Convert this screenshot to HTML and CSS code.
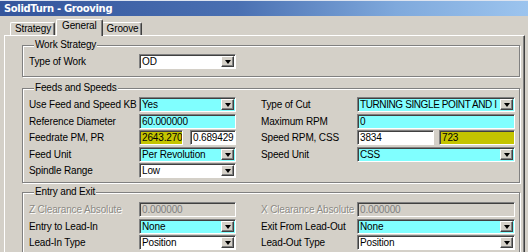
FILE: index.html
```html
<!DOCTYPE html>
<html>
<head>
<meta charset="utf-8">
<link rel="stylesheet" href="styles.css">
</head>
<body>
<div class="window">
  <div class="titlebar"><span class="title">SolidTurn - Grooving</span></div>
  <div class="client">
    <div class="tabs">
      <div class="tab first">Strategy</div>
      <div class="tab active">General</div>
      <div class="tab">Groove</div>
    </div>
    <div class="panel">
      <fieldset class="group g-work">
        <legend>Work Strategy</legend>
        <div class="grid">
          <div class="lbl">Type of Work</div>
          <div class="combo white"><span class="val">OD</span><span class="btn"><i></i></span></div>
        </div>
      </fieldset>

      <fieldset class="group g-feeds">
        <legend>Feeds and Speeds</legend>
        <div class="grid">
          <div class="lbl">Use Feed and Speed KB</div>
          <div class="combo cyan"><span class="val">Yes</span><span class="btn"><i></i></span></div>
          <div class="lbl r">Type of Cut</div>
          <div class="combo cyan"><span class="val caps">TURNING SINGLE POINT AND I</span><span class="btn"><i></i></span></div>

          <div class="lbl">Reference Diameter</div>
          <div class="field cyan">60.000000</div>
          <div class="lbl r">Maximum RPM</div>
          <div class="field cyan">0</div>

          <div class="lbl">Feedrate PM, PR</div>
          <div class="pair left">
            <div class="field olive">2643.270</div>
            <div class="field white">0.689429</div>
          </div>
          <div class="lbl r">Speed RPM, CSS</div>
          <div class="pair right">
            <div class="field white">3834</div>
            <div class="field olive">723</div>
          </div>

          <div class="lbl">Feed Unit</div>
          <div class="combo cyan"><span class="val">Per Revolution</span><span class="btn"><i></i></span></div>
          <div class="lbl r">Speed Unit</div>
          <div class="combo cyan"><span class="val">CSS</span><span class="btn"><i></i></span></div>

          <div class="lbl">Spindle Range</div>
          <div class="combo white"><span class="val">Low</span><span class="btn"><i></i></span></div>
        </div>
      </fieldset>

      <fieldset class="group g-entry">
        <legend>Entry and Exit</legend>
        <div class="grid">
          <div class="lbl dis">Z Clearance Absolute</div>
          <div class="field disabled">0.000000</div>
          <div class="lbl r dis">X Clearance Absolute</div>
          <div class="field disabled">0.000000</div>

          <div class="lbl">Entry to Lead-In</div>
          <div class="combo cyan"><span class="val">None</span><span class="btn"><i></i></span></div>
          <div class="lbl r">Exit From Lead-Out</div>
          <div class="combo cyan"><span class="val">None</span><span class="btn"><i></i></span></div>

          <div class="lbl">Lead-In Type</div>
          <div class="combo white"><span class="val">Position</span><span class="btn"><i></i></span></div>
          <div class="lbl r">Lead-Out Type</div>
          <div class="combo white"><span class="val">Position</span><span class="btn"><i></i></span></div>

          <div class="lbl"></div>
          <div class="field white"></div>
          <div class="lbl r"></div>
          <div class="field white"></div>
        </div>
      </fieldset>
    </div>
  </div>
</div>
</body>
</html>
```

FILE: styles.css
```css
* { box-sizing: border-box; }
html, body { margin: 0; padding: 0; }
body {
  width: 528px;
  height: 252px;
  overflow: hidden;
  background: #d4d0c8;
  font-family: "Liberation Sans", Arial, sans-serif;
  font-size: 10px;
  letter-spacing: -0.15px;
  color: #000;
}
.window {
  width: 528px;
  height: 252px;
  display: flex;
  flex-direction: column;
  overflow: hidden;
}
.titlebar {
  height: 16px;
  flex: none;
  border-top: 1px solid #dde4f0;
  background: linear-gradient(to right, #34559c 0%, #4a70b2 45%, #7fa9dc 75%, #9cc4ee 100%);
  display: flex;
  align-items: center;
  padding-left: 4px;
}
.title {
  color: #fff;
  font-family: "DejaVu Sans", sans-serif;
  font-weight: bold;
  font-size: 10px;
  letter-spacing: -0.35px;
}
.client {
  flex: 1;
  min-height: 0;
  padding: 0 3px 0 4px;
  display: flex;
  flex-direction: column;
}
.tabs {
  height: 19px;
  flex: none;
  display: flex;
  align-items: flex-end;
  padding-left: 6px;
}
.tab {
  height: 13px;
  padding: 0 3px 0 4px;
  border-top: 1px solid #fff;
  border-left: 1px solid #fff;
  border-right: 1px solid #404040;
  border-radius: 2px 2px 0 0;
  line-height: 12px;
  box-shadow: inset -1px 0 #808080;
}
.tab.active {
  padding: 0 5px 0 5px;
  margin: 0 -1px -1px 1px;
  position: relative;
  z-index: 1;
  background: #d4d0c8;
  line-height: 12px;
  height: 17px;
}
.panel {
  flex: 1;
  min-height: 0;
  overflow: hidden;
  border-top: 1px solid #fff;
  border-left: 1px solid #fff;
  border-right: 1px solid #404040;
  box-shadow: inset -1px 0 #808080;
  padding: 3px 4px 0 17px;
}
.group {
  margin: 0;
  padding: 3px 0 0 6px;
  border: 1px solid #808080;
  box-shadow: inset 1px 1px #fff, 1px 1px #fff;
  min-width: 0;
}
.group legend {
  padding: 0 1px;
  margin-left: 5px;
  background: #d4d0c8;
  line-height: 12px;
}
.g-work { height: 38px; }
.g-feeds { margin-top: 5px; height: 101px; }
.g-entry { margin-top: 3px; height: 80px; padding-top: 4px; }
.grid {
  display: grid;
  grid-template-columns: 110px 97px 121px 158px;
  grid-auto-rows: 15px;
  row-gap: 1.5px;
  align-items: center;
}
.lbl { white-space: nowrap; line-height: 15px; }
.lbl.r { padding-left: 25px; }
.lbl.dis { color: #8c8a84; text-shadow: 1px 1px #fff; }
.field, .combo {
  height: 15px;
  border: 1px solid;
  border-color: #808080 #fff #fff #808080;
  box-shadow: inset 1px 1px #404040;
  line-height: 13px;
  padding-left: 2px;
  white-space: nowrap;
  overflow: hidden;
}
.combo {
  display: flex;
  align-items: stretch;
  padding-right: 1px;
  padding-top: 1px;
  padding-bottom: 1px;
}
.combo .val { flex: 1; overflow: hidden; line-height: 12px; }
.combo .val.caps { letter-spacing: -0.4px; }
.btn {
  width: 13px;
  flex: none;
  background: #d4d0c8;
  border: 1px solid;
  border-color: #fff #404040 #404040 #fff;
  box-shadow: inset -1px -1px #808080;
  display: flex;
  align-items: center;
  justify-content: center;
}
.btn i {
  width: 0; height: 0;
  border-left: 3.5px solid transparent;
  border-right: 3.5px solid transparent;
  border-top: 4px solid #000;
  margin-top: 1px;
}
.white { background: #fff; }
.cyan { background: #80ffff; }
.olive { background: #c4c400; }
.disabled { background: #d4d0c8; color: #808080; }
.pair { display: flex; justify-content: space-between; }
.pair.left .field:first-child { width: 44px; }
.pair.left .field:last-child { width: 46px; }
.pair.right .field { width: 77px; }
.pair.right .field:last-child { width: 76px; }
```
